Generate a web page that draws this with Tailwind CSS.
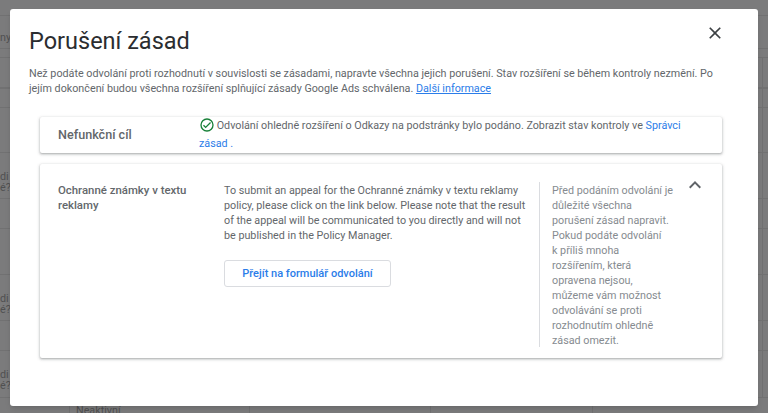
<!DOCTYPE html>
<html lang="en">
  <head>
    <meta charset="UTF-8" />
    <title>Porušení zásad</title>
    <script src="https://cdn.jsdelivr.net/npm/@tailwindcss/browser@4"></script>
  </head>
  <body class="w-[768px] h-[413px] overflow-hidden relative bg-[#7b7b7c] font-['Roboto',sans-serif]">

    <!-- Page behind the overlay -->
    <div class="h-[413px] text-[10.75px] text-[#505051] leading-[11px]">
      <div class="h-[16px] border-b border-[#717172]"></div>
      <div class="h-[33px] border-b border-[#717172] pt-[16px]">ny</div>
      <div class="h-[9px] border-b border-[#717172]"></div>
      <div class="relative">
        <div class="absolute left-[762px] top-0 h-[340px] border-l border-[#717172]"></div>
        <div class="h-[31px] border-b-2 border-[#717172]"></div>
        <div class="h-[19px] border-b border-[#717172]"></div>
        <div class="h-[45px] border-b border-[#717172]"></div>
        <div class="h-[46px] border-b border-[#717172] pt-[18px]">di<br />é?</div>
        <div class="h-[30px] border-b border-[#717172]"></div>
        <div class="h-[46px] border-b border-[#717172]"></div>
        <div class="h-[46px] border-b border-[#717172] pt-[18px]">di<br />é?</div>
        <div class="h-[30px] border-b border-[#717172]"></div>
        <div class="h-[47px] border-b border-[#717172] pt-[18px]">di<br />é?</div>
      </div>
      <div class="h-[16px] flex">
        <div class="w-[70px] border-r border-[#717172]"></div>
        <div class="w-[180px] border-r border-[#717172] pl-[6px] pt-[7px]">Neaktivní</div>
        <div class="w-[181px] border-r border-[#717172]"></div>
        <div class="w-[162px] border-r border-[#717172]"></div>
      </div>
    </div>

    <!-- Dialog -->
    <div class="absolute left-[10px] top-[9px] w-[748px] h-[397px] bg-white rounded-[3px] shadow-md pl-[19px] pt-[16px]">
      <button class="absolute left-[695px] top-[14px] w-[20px] h-[20px] flex items-center justify-center text-[#3c4043]">
        <svg class="w-[20px] h-[20px]" viewBox="0 0 24 24" fill="currentColor"><path d="M19 6.41 17.59 5 12 10.59 6.41 5 5 6.41 10.59 12 5 17.59 6.41 19 12 13.41 17.59 19 19 17.59 13.41 12z"/></svg>
      </button>

      <h1 class="text-[23.5px] leading-[32px] text-[#2b2d30]">Porušení zásad</h1>
      <p class="mt-[9px] text-[10.75px] leading-[15px] text-[#63676b] w-[690px]">Než podáte odvolání proti rozhodnutí v souvislosti se zásadami, napravte všechna jejich porušení. Stav rozšíření se během kontroly nezmění. Po jejím dokončení budou všechna rozšíření splňující zásady Google Ads schválena. <a href="#" class="text-[#2b7de9] underline">Další informace</a></p>

      <!-- Collapsed row -->
      <div class="mt-[21px] ml-[11px] w-[682px] h-[36px] rounded-[2px] bg-white shadow-[0_1px_2px_rgba(60,64,67,0.3),0_1px_3px_1px_rgba(60,64,67,0.15)] flex">
        <div class="w-[159px] pl-[18px] pt-[10px] text-[12.6px] leading-[15px] font-medium text-[#63676b]">Nefunkční cíl</div>
        <div class="w-[505px] text-[10.75px] leading-[18px] text-[#63676b]">
          <svg class="inline-block w-[16px] h-[16px] -mr-[1px] align-[-4px] text-[#188038]" viewBox="0 0 24 24" fill="currentColor"><path d="M12 2a10 10 0 1 0 0 20 10 10 0 0 0 0-20zm0 18a8 8 0 1 1 0-16 8 8 0 0 1 0 16zm4.59-12.42L10 14.17l-2.59-2.58L6 13l4 4 8-8z"/></svg>
          Odvolání ohledně rozšíření o Odkazy na podstránky bylo podáno. Zobrazit stav kontroly ve <a href="#" class="text-[#2b7de9]">Správci zásad</a> <span class="text-[#2b7de9]">.</span>
        </div>
      </div>

      <!-- Expanded row -->
      <div class="mt-[11px] ml-[11px] w-[682px] h-[194px] rounded-[2px] bg-white shadow-[0_1px_2px_rgba(60,64,67,0.3),0_1px_3px_1px_rgba(60,64,67,0.15)] flex pt-[19px]">
        <div class="w-[184px] pl-[18px] pr-[20px] text-[11.4px] leading-[15px] font-medium text-[#63676b]">Ochranné známky v textu reklamy</div>
        <div class="w-[315px] text-[10.75px] leading-[15px] text-[#63676b]">
          <p class="w-[305px]">To submit an appeal for the Ochranné známky v textu reklamy policy, please click on the link below. Please note that the result of the appeal will be communicated to you directly and will not be published in the Policy Manager.</p>
          <button class="mt-[17px] w-[167px] h-[27px] rounded-[3px] border border-[#dadce0] text-[#2b7de9] text-[11px] font-medium">Přejít na formulář odvolání</button>
        </div>
        <div class="w-[136px] h-[165px] -mt-[1px] border-l border-[#dadce0] pl-[12px] pt-[1px] text-[10.75px] leading-[15px] text-[#868b90]">Před podáním odvolání je důležité všechna<br />porušení zásad napravit. Pokud podáte odvolání<br />k&nbsp;příliš mnoha<br />rozšířením, která<br />opravena nejsou,<br />můžeme vám možnost odvolávání se proti rozhodnutím ohledně zásad omezit.</div>
        <svg class="w-[24px] h-[24px] ml-[8px] -mt-[10px] text-[#5f6368]" viewBox="0 0 24 24" fill="currentColor"><path d="M7.41 15.41 12 10.83l4.59 4.58L18 14l-6-6-6 6z"/></svg>
      </div>
    </div>
  </body>
</html>
